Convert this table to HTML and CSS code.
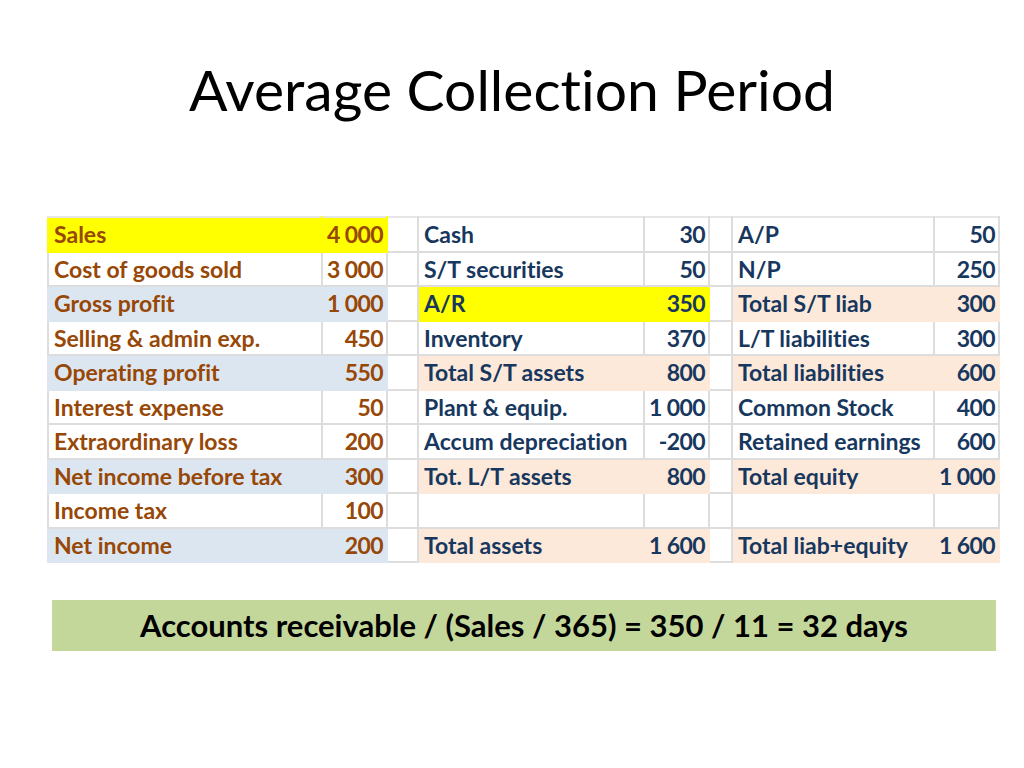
FILE: index.html
```html
<!DOCTYPE html>
<html>
<head>
<meta charset="utf-8">
<link rel="stylesheet" href="styles.css">
</head>
<body>
<div class="slide">
  <h1 class="title">Average Collection Period</h1>
  <table class="fin">
    <colgroup>
      <col class="c-lab1"><col class="c-val"><col class="c-gap1">
      <col class="c-lab2"><col class="c-val"><col class="c-gap2">
      <col class="c-lab3"><col class="c-val">
    </colgroup>
    <tr>
      <td class="is yel">Sales</td><td class="is yel num">4<span class="sp"></span>000</td><td></td>
      <td class="bs">Cash</td><td class="bs num">30</td><td></td>
      <td class="bs">A/P</td><td class="bs num">50</td>
    </tr>
    <tr>
      <td class="is">Cost of goods sold</td><td class="is num">3<span class="sp"></span>000</td><td></td>
      <td class="bs">S/T securities</td><td class="bs num">50</td><td></td>
      <td class="bs">N/P</td><td class="bs num">250</td>
    </tr>
    <tr>
      <td class="is blu">Gross profit</td><td class="is blu num">1<span class="sp"></span>000</td><td></td>
      <td class="bs yel">A/R</td><td class="bs yel num">350</td><td></td>
      <td class="bs pch">Total S/T liab</td><td class="bs pch num">300</td>
    </tr>
    <tr>
      <td class="is">Selling &amp; admin exp.</td><td class="is num">450</td><td></td>
      <td class="bs">Inventory</td><td class="bs num">370</td><td></td>
      <td class="bs">L/T liabilities</td><td class="bs num">300</td>
    </tr>
    <tr>
      <td class="is blu">Operating profit</td><td class="is blu num">550</td><td></td>
      <td class="bs pch">Total S/T assets</td><td class="bs pch num">800</td><td></td>
      <td class="bs pch">Total liabilities</td><td class="bs pch num">600</td>
    </tr>
    <tr>
      <td class="is">Interest expense</td><td class="is num">50</td><td></td>
      <td class="bs">Plant &amp; equip.</td><td class="bs num">1<span class="sp"></span>000</td><td></td>
      <td class="bs">Common Stock</td><td class="bs num">400</td>
    </tr>
    <tr>
      <td class="is">Extraordinary loss</td><td class="is num">200</td><td></td>
      <td class="bs">Accum depreciation</td><td class="bs num">-200</td><td></td>
      <td class="bs">Retained earnings</td><td class="bs num">600</td>
    </tr>
    <tr>
      <td class="is blu">Net income before tax</td><td class="is blu num">300</td><td></td>
      <td class="bs pch">Tot. L/T assets</td><td class="bs pch num">800</td><td></td>
      <td class="bs pch">Total equity</td><td class="bs pch num">1<span class="sp"></span>000</td>
    </tr>
    <tr>
      <td class="is">Income tax</td><td class="is num">100</td><td></td>
      <td></td><td></td><td></td>
      <td></td><td></td>
    </tr>
    <tr>
      <td class="is blu">Net income</td><td class="is blu num">200</td><td></td>
      <td class="bs pch">Total assets</td><td class="bs pch num">1<span class="sp"></span>600</td><td></td>
      <td class="bs pch">Total liab+equity</td><td class="bs pch num">1<span class="sp"></span>600</td>
    </tr>
  </table>
  <div class="formula">Accounts receivable / (Sales / 365) = 350 / 11 = 32 days</div>
</div>
</body>
</html>
```
FILE: styles.css
```css
html, body {
  margin: 0;
  padding: 0;
  background: #ffffff;
}
.slide {
  width: 1024px;
  height: 768px;
  overflow: hidden;
  font-family: Lato, "Open Sans", "Liberation Sans", sans-serif;
  font-variant-ligatures: none;
  padding-top: 52px;
  box-sizing: border-box;
}
.title {
  margin: 0;
  font-weight: 400;
  font-size: 57px;
  line-height: 74px;
  height: 74px;
  text-align: center;
  color: #000000;
}
.fin {
  margin: 90px 0 0 47px;
  border-collapse: collapse;
  table-layout: fixed;
  width: 951px;
}
.c-lab1 { width: 274px; }
.c-val { width: 65px; }
.c-gap1 { width: 31px; }
.c-lab2 { width: 226px; }
.c-gap2 { width: 23px; }
.c-lab3 { width: 202px; }
.fin td {
  height: 34.5px;
  padding: 0 4px 0 5px;
  border: 2px solid #dddddd;
  font-size: 23px;
  font-weight: 700;
  white-space: nowrap;
  overflow: hidden;
  vertical-align: middle;
  box-sizing: border-box;
}
.fin tr:first-child td { border-top-color: #e6e6e6; }
.fin td.num {
  text-align: right;
  padding: 0 3px 0 0;
  letter-spacing: -0.6px;
}
.sp {
  display: inline-block;
  width: 5px;
}
.is { color: #974706; }
.bs { color: #17375e; }
.fin td.yel { background: #ffff00; border-color: #ffff00; }
.fin td.blu { background: #dce6f1; border-color: #dce6f1; }
.fin td.pch { background: #fde9d9; border-color: #fde9d9; }
.formula {
  margin: 37px 0 0 52px;
  width: 944px;
  height: 51px;
  background: #c4d79b;
  color: #000000;
  font-weight: 700;
  font-size: 31px;
  line-height: 51px;
  text-align: center;
}
```
